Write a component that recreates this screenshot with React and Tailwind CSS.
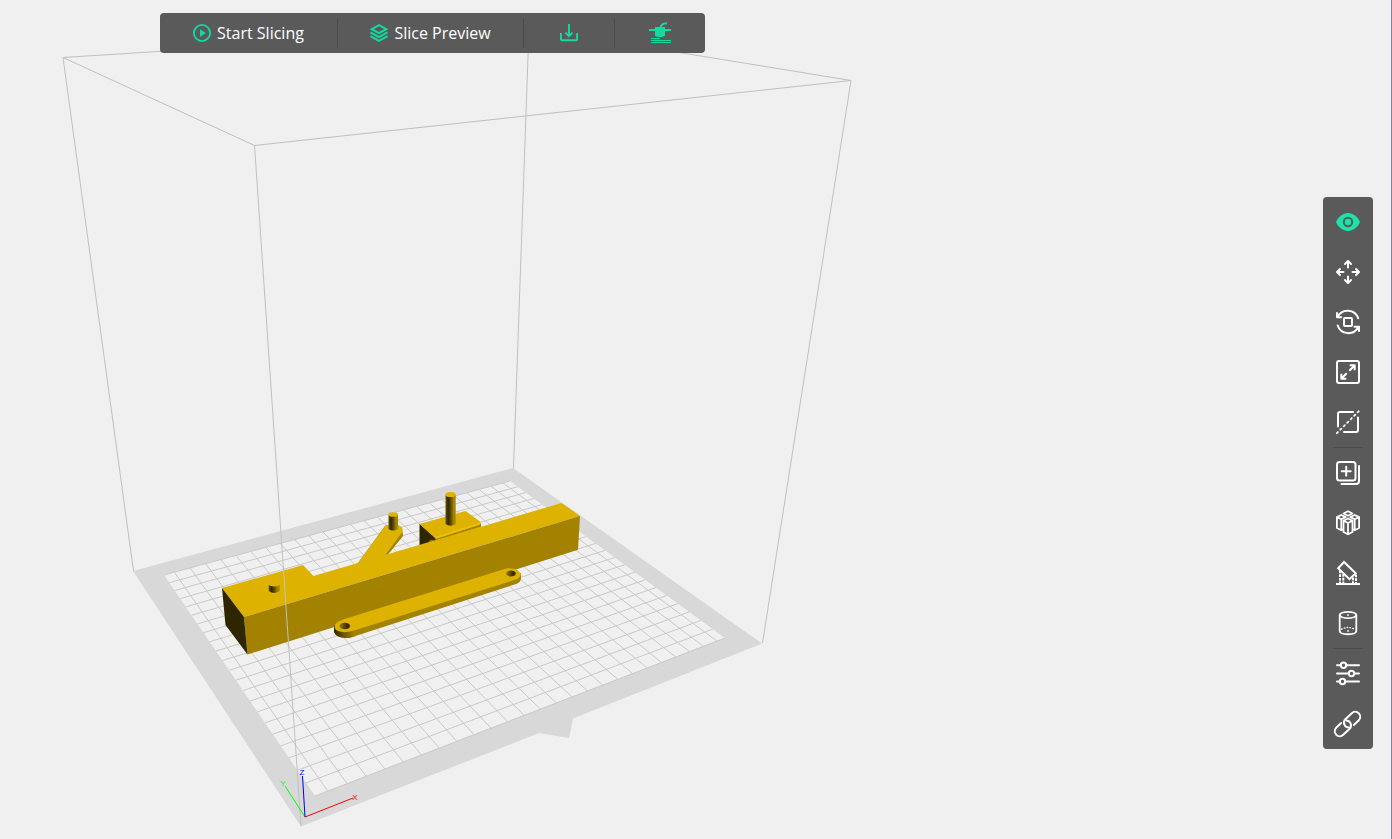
const PLATE = [
  [315, 796],
  [725, 638],
  [510, 481],
  [164, 575],
];

const COLUMNS = 25.25;
const COLUMN_START = 0.65;
const ROWS = 22;

function project(u, v) {
  const [[x0, y0], [x1, y1], [x2, y2], [x3, y3]] = PLATE;
  const dx1 = x1 - x2;
  const dx2 = x3 - x2;
  const dx3 = x0 - x1 + x2 - x3;
  const dy1 = y1 - y2;
  const dy2 = y3 - y2;
  const dy3 = y0 - y1 + y2 - y3;
  const det = dx1 * dy2 - dx2 * dy1;
  const g = (dx3 * dy2 - dx2 * dy3) / det;
  const h = (dx1 * dy3 - dx3 * dy1) / det;
  const w = g * u + h * v + 1;
  return [
    ((x1 - x0 + g * x1) * u + (x3 - x0 + h * x3) * v + x0) / w,
    ((y1 - y0 + g * y1) * u + (y3 - y0 + h * y3) * v + y0) / w,
  ];
}

function gridPath() {
  const parts = [];
  for (let i = 0; i < 25; i++) {
    const u = (COLUMN_START + i) / COLUMNS;
    parts.push(`M${project(u, 0)}L${project(u, 1)}`);
  }
  for (let j = 0; j <= ROWS; j++) {
    parts.push(`M${project(0, j / ROWS)}L${project(1, j / ROWS)}`);
  }
  return parts.join('');
}

function Scene() {
  return (
    <svg
      className="absolute inset-0 h-full w-full"
      viewBox="0 0 1391 838"
      preserveAspectRatio="xMinYMin meet"
      role="img"
      aria-label="Build plate with model"
    >
      <defs>
        <linearGradient id="pin" x1="0" x2="1" y1="0" y2="0">
          <stop offset="0" stopColor="#6b5600" />
          <stop offset="0.25" stopColor="#2f2600" />
          <stop offset="0.5" stopColor="#5a4800" />
          <stop offset="0.8" stopColor="#a28200" />
          <stop offset="1" stopColor="#a88700" />
        </linearGradient>
        <linearGradient id="hole" x1="0" x2="1" y1="0" y2="0">
          <stop offset="0" stopColor="#a28200" />
          <stop offset="0.45" stopColor="#5a4800" />
          <stop offset="0.8" stopColor="#2f2600" />
          <stop offset="1" stopColor="#6b5600" />
        </linearGradient>
        <linearGradient id="barEnd" gradientUnits="userSpaceOnUse" x1="334" x2="354" y1="0" y2="0">
          <stop offset="0" stopColor="#2f2600" />
          <stop offset="0.5" stopColor="#6b5600" />
          <stop offset="1" stopColor="#a28200" />
        </linearGradient>
      </defs>

      <path d="M133 571L513 468L762 643.500L573 718.500L569 738L539 733L301 826.500Z" fill="#d8d8d8" />
      <path d="M315 796L725 638L510 481L164 575Z" fill="#f0f0f0" />
      <path d={gridPath()} stroke="#c9c9c9" strokeWidth="1" fill="none" />

      <g stroke="#c0c0c0" strokeWidth="1" fill="none">
        <path d="M63 57.500L529 28L851 80.500L254.500 145.500Z" />
        <path d="M63 57.500L133.500 571M529 28L513.500 468M851 80.500L762.500 643" />
      </g>

      <path d="M358 563L385 526Q393 522 402 528L403 536L386 557L370 562Z" fill="#a28200" />
      <path d="M358 563L385 526Q393 522 401 526.500Q404 530 401.500 533L384 557L377 561Z" fill="#deb200" />
      <path d="M388.500 515V529Q393 532 398 529V515Z" fill="url(#pin)" />
      <ellipse cx="393.250" cy="514.500" rx="4.800" ry="2.300" fill="#deb200" />

      <path d="M419.500 524L436 538L439 545H419.500Z" fill="#2f2600" />
      <path d="M435 538L481 523.500V529L437 545Z" fill="#a28200" />
      <path d="M419.500 524L465.500 511L480 521.500Q482 524 479 525L436 539Z" fill="#deb200" />
      <path d="M436 537.500L480 523.500" stroke="#f0c200" strokeWidth="1.500" />
      <path d="M437 540.500L481 526.500V528.500L438 543Z" fill="#d0a700" />
      <path d="M429 541Q432 538 435 541L437 544L430 546Z" fill="#8a6f00" />
      <path d="M445.500 495V524Q450.500 527.500 455.700 524V495Z" fill="url(#pin)" />
      <ellipse cx="450.600" cy="494.500" rx="5.200" ry="2.600" fill="#deb200" />

      <path d="M222 588L303 565L313.500 576L561.500 503L580 516L244 617Z" fill="#deb200" />
      <path d="M244 617L580 516L578 549.700L247.500 654.500Z" fill="#a28200" />
      <path d="M222 588L244 617L247.500 654.500L225.500 625Z" fill="#2f2600" />
      <path d="M268.700 585V591Q274 595 279.700 591V585Z" fill="url(#pin)" />
      <ellipse cx="274.200" cy="583.800" rx="5.800" ry="2.700" fill="#deb200" />

      <path d="M334 625V632Q337 639 350 637.700L516 584Q521 582 521 578V573L345 620Z" fill="#a28200" />
      <path d="M334 625V632Q337 639 350 637.700L356 636V627H340Z" fill="url(#barEnd)" />
      <path
        d="M343 619.500L503 569.500Q511 567 517 570Q525 575 516 579.500L354 630.500Q342 634 336 630Q331 624 343 619.500Z"
        fill="#deb200"
      />
      <ellipse cx="344.800" cy="626" rx="5.500" ry="3.200" fill="url(#hole)" />
      <ellipse cx="511" cy="573.500" rx="5" ry="3" fill="url(#hole)" />

      <path d="M254.500 145.500L301 826" stroke="#c0c0c0" strokeWidth="1" />

      <path d="M305 817L353 798" stroke="#ff0000" />
      <path d="M305 817L285 786" stroke="#00ff00" />
      <path d="M305 817L302.500 776" stroke="#0000ff" />
      <g fontFamily="'Liberation Sans', sans-serif" fontSize="8" textAnchor="middle">
        <text x="355" y="800" fill="#ff0000">X</text>
        <text x="283" y="786" fill="#00ff00">Y</text>
        <text x="302" y="775" fill="#0000ff">Z</text>
      </g>
    </svg>
  );
}

function Icon({ children }) {
  return (
    <svg
      className="h-6 w-6 overflow-visible"
      viewBox="0 0 24 24"
      fill="none"
      stroke="currentColor"
      strokeWidth="2"
      strokeLinecap="round"
      strokeLinejoin="round"
      aria-hidden="true"
    >
      {children}
    </svg>
  );
}

const VIEW_TOOLS = [
  {
    label: 'View',
    active: true,
    icon: (
      <>
        <path
          d="M0 12C2.500 6.500 7 3 12 3S21.500 6.500 24 12C21.500 17.500 17 21 12 21S2.500 17.500 0 12Z"
          fill="currentColor"
          stroke="none"
        />
        <circle cx="12" cy="12" r="4.200" stroke="#5a5a5a" />
      </>
    ),
  },
  {
    label: 'Move',
    icon: (
      <path d="M12 1.500V7.500M9 4L12 1L15 4M12 16.500V22.500M9 20L12 23L15 20M1.500 12H7.500M4 9L1 12L4 15M16.500 12H22.500M20 9L23 12L20 15" />
    ),
  },
  {
    label: 'Rotate',
    icon: (
      <>
        <rect x="8" y="8" width="8" height="8" rx="1" />
        <path d="M1.500 7A11.200 11.200 0 0 1 22.200 8.300M1 3V7.200H5.200M1.700 15.500A11.200 11.200 0 0 0 22.300 17M18.500 16.800H23V21" />
      </>
    ),
  },
  {
    label: 'Scale',
    icon: (
      <>
        <rect x="1" y="1" width="22" height="22" rx="2" />
        <path d="M14.500 5.300H18.700V9.500M18.300 5.700L13.800 10.200M5.300 14.500V18.700H9.500M5.700 18.300L10.200 13.800" />
      </>
    ),
  },
  {
    label: 'Cut',
    icon: (
      <>
        <path d="M2 16.500V4Q2 2 4 2H17M22 7.500V20Q22 22 20 22H8" />
        <path d="M0.800 23.200L23.200 0.800" strokeDasharray="1.600 3.300" strokeWidth="1.800" />
      </>
    ),
  },
];

const MODEL_TOOLS = [
  {
    label: 'Duplicate',
    icon: (
      <>
        <rect x="1" y="1" width="18.500" height="18.500" rx="2.500" />
        <path d="M10.200 5.700V14.700M5.700 10.200H14.700M23 5V20Q23 23 20 23H5.500" />
      </>
    ),
  },
  {
    label: 'Arrange',
    icon: (
      <g strokeWidth="1.800">
        <path d="M12 0.300L16.500 2.500L12 4.700L7.500 2.500Z" />
        <path d="M7.500 9.700L12 7.500L16.500 9.700L12 12ZM7.500 9.700V21L12 23.300L16.500 21V9.700M12 12V23.300" />
        <path d="M5.300 4L9.700 6.100L5.300 8.300L0.900 6.100ZM0.900 6.100V17L5.300 19.200M5.300 8.300V19.200L7 18.500" />
        <path d="M18.700 4L14.300 6.100L18.700 8.300L23.100 6.100ZM23.100 6.100V17L18.700 19.200M18.700 8.300V19.200L17 18.500" />
      </g>
    ),
  },
  {
    label: 'Supports',
    icon: (
      <>
        <path d="M8 1L2.200 7.300L13.500 18.200L19.700 12.300Z" strokeLinejoin="miter" />
        <path d="M0 23H24" strokeLinecap="butt" />
        <path d="M4 9.500V22M7.300 13V22M17 16.500V22M20 13.500V22" strokeDasharray="2.700 1" strokeLinecap="butt" />
      </>
    ),
  },
  {
    label: 'Hollow',
    icon: (
      <g strokeWidth="1.800">
        <ellipse cx="12" cy="4" rx="8.300" ry="3.200" />
        <path d="M3.700 4V20C3.700 24.300 20.300 24.300 20.300 20V4" />
        <path d="M5.500 18.200Q12 14.800 18.500 18.200" strokeDasharray="0.600 2.300" strokeWidth="1.400" />
        <path d="M12 4V4.100M12 19.800V19.900" />
      </g>
    ),
  },
];

const SETTING_TOOLS = [
  {
    label: 'Parameters',
    icon: (
      <>
        <path d="M1 3.300H4.500M10.500 3.300H23M1 11.500H12.500M18.500 11.500H23M1 19.500H3.500M9.500 19.500H23" />
        <circle cx="7.500" cy="3.300" r="2.700" />
        <circle cx="15.500" cy="11.500" r="2.700" />
        <circle cx="6.500" cy="19.500" r="2.700" />
      </>
    ),
  },
  {
    label: 'Link',
    icon: (
      <g transform="rotate(-43 11.500 12)">
        <path d="M7.500 7H1A5 5 0 0 0 1 17H9.500A5 5 0 0 0 13 8.500" />
        <path d="M15.500 17H22A5 5 0 0 0 22 7H13.500A5 5 0 0 0 10 15.500" />
      </g>
    ),
  },
];

function ToolButton({ label, icon, active }) {
  return (
    <button
      type="button"
      aria-label={label}
      title={label}
      aria-pressed={Boolean(active)}
      className={`flex size-[50px] items-center justify-center ${active ? 'text-[#1de2a9]' : 'text-white'}`}
    >
      <Icon>{icon}</Icon>
    </button>
  );
}

function ToolGroup({ tools }) {
  return tools.map((tool) => <ToolButton key={tool.label} {...tool} />);
}

function SideDivider() {
  return <hr className="w-[30px] border-t border-[#4b4b4b]" />;
}

function TopDivider() {
  return <span className="h-[30px] w-px bg-[#4b4b4b]" />;
}

function TopBar() {
  return (
    <div
      role="toolbar"
      aria-label="Slicing"
      className="relative mt-[13px] ml-40 flex h-10 items-center rounded bg-[#5a5a5a] font-['Open_Sans','Noto_Sans',sans-serif] text-base text-white"
    >
      <button type="button" className="flex h-full w-[177px] items-center justify-center gap-[6px] whitespace-nowrap">
        <svg className="size-[18px] text-[#10dba0]" viewBox="0 0 18 18" fill="none" stroke="currentColor" strokeWidth="1.800" aria-hidden="true">
          <circle cx="9" cy="9" r="8.100" />
          <path d="M7 5.200L13 9L7 12.800Z" fill="currentColor" stroke="none" />
        </svg>
        Start Slicing
      </button>
      <TopDivider />
      <button type="button" className="flex h-full w-[185px] items-center justify-center gap-[6px] whitespace-nowrap">
        <svg className="size-[18px] text-[#10dba0]" viewBox="0 0 18 18" fill="none" stroke="currentColor" strokeWidth="2" aria-hidden="true">
          <path d="M9 1.200L16.300 5.200L9 9.200L1.700 5.200Z" />
          <path d="M0.500 8.400L9 13.100L17.500 8.400M0.500 12.200L9 16.900L17.500 12.200" />
        </svg>
        Slice Preview
      </button>
      <TopDivider />
      <button type="button" aria-label="Download" className="flex h-full w-[90px] items-center justify-center text-[#10dba0]">
        <svg className="size-[18px]" viewBox="0 0 18 18" fill="none" stroke="currentColor" strokeWidth="1.900" aria-hidden="true">
          <path d="M9 0V12M5.500 8.700L9 12.200L12.500 8.700M0.900 9V15.200Q0.900 16.200 1.900 16.200H16.100Q17.100 16.200 17.100 15.200V9" />
        </svg>
      </button>
      <TopDivider />
      <button type="button" aria-label="Print" className="flex h-full w-[90px] items-center justify-center text-[#10dba0]">
        <svg className="size-[22px]" viewBox="0 0 22 22" fill="currentColor" aria-hidden="true">
          <path d="M11.500 6.500C11.500 3 13 1.200 18 1.200" fill="none" stroke="currentColor" strokeWidth="2" />
          <path d="M0 7H6V5H16V7H22V9H16V14L13 15H9L6 14V9H0Z" />
          <path d="M2 16H11V17H2ZM2 18H22V19H2ZM2 20H22V21H2Z" />
        </svg>
      </button>
    </div>
  );
}

export default function App() {
  return (
    <main className="relative flex min-h-screen items-start justify-between border-r border-[#85858f] bg-[#f0f0f0]">
      <Scene />
      <TopBar />
      <aside
        role="toolbar"
        aria-label="Tools"
        className="relative mt-[197px] mr-[18px] flex flex-col items-center rounded bg-[#5a5a5a]"
      >
        <ToolGroup tools={VIEW_TOOLS} />
        <SideDivider />
        <ToolGroup tools={MODEL_TOOLS} />
        <SideDivider />
        <ToolGroup tools={SETTING_TOOLS} />
      </aside>
    </main>
  );
}
